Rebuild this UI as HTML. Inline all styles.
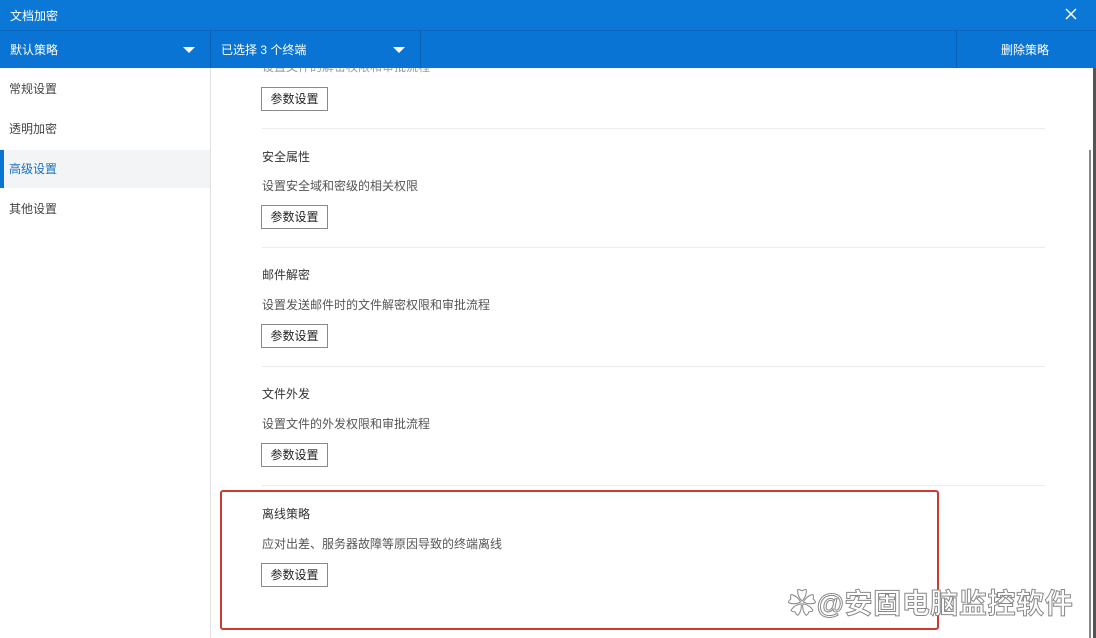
<!DOCTYPE html>
<html><head><meta charset="utf-8"><style>
*{margin:0;padding:0;box-sizing:border-box}
body{width:1096px;height:638px;overflow:hidden;background:#fff;font-family:"Liberation Sans","Noto Sans CJK SC",sans-serif;font-size:12px;color:#333;position:relative}
.a{position:absolute}
.title{left:0;top:0;width:1096px;height:30px;background:#0b78d7;color:#fff}
.bar{left:0;top:30px;width:1096px;height:38px;background:#0a74d4;color:#fff;border-top:1px solid #0a66bc}
.sep{top:30px;width:1px;height:38px;background:#0860b2}
.tri{width:0;height:0;border-left:6px solid transparent;border-right:6px solid transparent;border-top:6px solid #fff}
.nav{left:9px;color:#444}
.line{left:262px;width:783px;height:1px;background:#ececec}
.btn{left:261px;width:67px;height:24px;border:1px solid #8a8a8a;background:#fff;font-size:12px;text-align:center;line-height:22px;color:#222}
.h{left:262px;color:#333}
.d{left:262px;color:#555}
</style></head><body>
<div class="a title"><span class="a" style="left:10px;top:7px">文档加密</span>
<svg class="a" style="left:1065px;top:8px" width="12" height="12"><path d="M1 1L11 11M11 1L1 11" stroke="#fff" stroke-width="1.5"/></svg></div>
<div class="a bar">
<span class="a" style="left:10px;top:10px">默认策略</span><div class="a tri" style="left:183px;top:16px"></div>
<span class="a" style="left:221px;top:10px">已选择 3 个终端</span><div class="a tri" style="left:393px;top:16px"></div>
<span class="a" style="left:1001px;top:10px">删除策略</span>
</div>
<div class="a sep" style="left:210px"></div><div class="a sep" style="left:420px"></div><div class="a sep" style="left:956px"></div>
<div class="a" style="left:210px;top:68px;width:1px;height:570px;background:#e0e0e0"></div>
<div class="a" style="left:0;top:150px;width:210px;height:38px;background:#f3f4f5"></div>
<div class="a" style="left:0;top:150px;width:4px;height:38px;background:#0a74d4"></div>
<span class="a nav" style="top:80px">常规设置</span>
<span class="a nav" style="top:120px">透明加密</span>
<span class="a nav" style="top:160px;color:#1a6fc0">高级设置</span>
<span class="a nav" style="top:200px">其他设置</span>
<div class="a" style="left:1093px;top:68px;width:3px;height:570px;background:#555"></div>
<div class="a" style="left:1089px;top:150px;width:2px;height:488px;background:#888"></div>
<span class="a d" style="top:58px;color:#999;clip-path:inset(10px 0 0 0)">设置文件的解密权限和审批流程</span>
<div class="a btn" style="top:87px">参数设置</div>
<div class="a line" style="top:128px"></div>
<span class="a h" style="top:148px">安全属性</span><span class="a d" style="top:177px">设置安全域和密级的相关权限</span><div class="a btn" style="top:205px">参数设置</div>
<div class="a line" style="top:247px"></div>
<span class="a h" style="top:266px">邮件解密</span><span class="a d" style="top:296px">设置发送邮件时的文件解密权限和审批流程</span><div class="a btn" style="top:324px">参数设置</div>
<div class="a line" style="top:366px"></div>
<span class="a h" style="top:385px">文件外发</span><span class="a d" style="top:415px">设置文件的外发权限和审批流程</span><div class="a btn" style="top:443px">参数设置</div>
<div class="a line" style="top:485px"></div>
<span class="a h" style="top:505px">离线策略</span><span class="a d" style="top:535px">应对出差、服务器故障等原因导致的终端离线</span><div class="a btn" style="top:563px">参数设置</div>
<div class="a" style="left:220px;top:490px;width:719px;height:140px;border:2.5px solid #cc3a33;border-radius:3px"></div>
<div class="a" style="left:788px;top:582px;font-size:28px;letter-spacing:0.6px;color:#fff;-webkit-text-stroke:1px #888;font-weight:bold;white-space:nowrap">✿@安固电脑监控软件</div>
</body></html>
